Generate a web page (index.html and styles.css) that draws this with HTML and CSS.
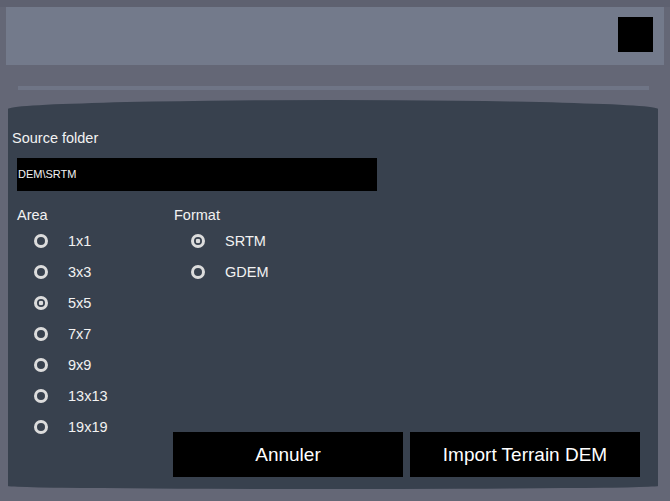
FILE: index.html
```html
<!DOCTYPE html>
<html lang="fr">
<head>
    <meta charset="UTF-8">
    <title>Import Terrain DEM</title>
    <link rel="stylesheet" href="styles.css">
</head>
<body>
    <div class="window">
        <div class="titlebar">
            <div class="close"></div>
        </div>
        <div class="divider"></div>

        <div class="panel">
            <div class="label">Source folder</div>
            <div class="path">DEM\SRTM</div>

            <div class="options">
                <div class="col">
                    <div class="label">Area</div>
                    <div class="radio-row"><span class="radio"></span>1x1</div>
                    <div class="radio-row"><span class="radio"></span>3x3</div>
                    <div class="radio-row"><span class="radio checked"></span>5x5</div>
                    <div class="radio-row"><span class="radio"></span>7x7</div>
                    <div class="radio-row"><span class="radio"></span>9x9</div>
                    <div class="radio-row"><span class="radio"></span>13x13</div>
                    <div class="radio-row"><span class="radio"></span>19x19</div>
                </div>
                <div class="col">
                    <div class="label">Format</div>
                    <div class="radio-row"><span class="radio checked"></span>SRTM</div>
                    <div class="radio-row"><span class="radio"></span>GDEM</div>
                    <div class="buttons">
                        <button>Annuler</button>
                        <button>Import Terrain DEM</button>
                    </div>
                </div>
            </div>
        </div>
    </div>
</body>
</html>
```

FILE: styles.css
```css
html, body {
    margin: 0;
    padding: 0;
}
body {
    width: 670px;
    height: 501px;
    overflow: hidden;
    background: #646776;
    font-family: "Liberation Sans", Arial, sans-serif;
    color: #f2f2f2;
}
.window {
    height: 501px;
    border-top: 7px solid #5e6170;
    box-sizing: border-box;
    display: flex;
    flex-direction: column;
}
.titlebar {
    margin: 0 6px 0 6px;
    height: 58px;
    background: #737a8b;
    display: flex;
    align-items: flex-start;
    justify-content: flex-end;
}
.close {
    width: 35px;
    height: 35px;
    background: #000;
    margin: 10px 11px 0 0;
}
.divider {
    margin: 21px 21px 0 18px;
    height: 4px;
    background: #6f7586;
}
.panel {
    margin: 10px 12px 0 8px;
    height: 389px;
    box-sizing: border-box;
    padding: 29px 18px 12px 4px;
    background: #38414e;
    border-radius: 50% 50% 50% 50% / 9px 9px 3px 3px;
    display: flex;
    flex-direction: column;
}
.label {
    font-size: 14.5px;
    line-height: 18px;
}
.path {
    margin: 11px 0 0 5px;
    width: 359px;
    height: 33px;
    padding-left: 1px;
    background: #000;
    font-size: 11px;
    line-height: 33px;
}
.options {
    margin: 15px 0 0 5px;
    flex: 1;
    display: grid;
    grid-template-columns: 157px 1fr;
}
.col {
    display: flex;
    flex-direction: column;
}
.radio-row {
    height: 31px;
    display: flex;
    align-items: center;
    font-size: 14.5px;
}
.col .label {
    margin-bottom: 1px;
}
.radio {
    width: 14px;
    height: 14px;
    box-sizing: border-box;
    border: 3px solid #dcdcdc;
    border-radius: 50%;
    margin: 0 20px 0 17px;
}
.radio.checked {
    background: radial-gradient(circle, #dcdcdc 0 2px, transparent 2.6px);
}
.buttons {
    margin: auto 0 0 -1px;
    display: flex;
    gap: 7px;
}
button {
    width: 230px;
    height: 45px;
    background: #000;
    color: #fff;
    border: none;
    padding: 0;
    font-family: "Liberation Sans", Arial, sans-serif;
    font-size: 19px;
}
```
